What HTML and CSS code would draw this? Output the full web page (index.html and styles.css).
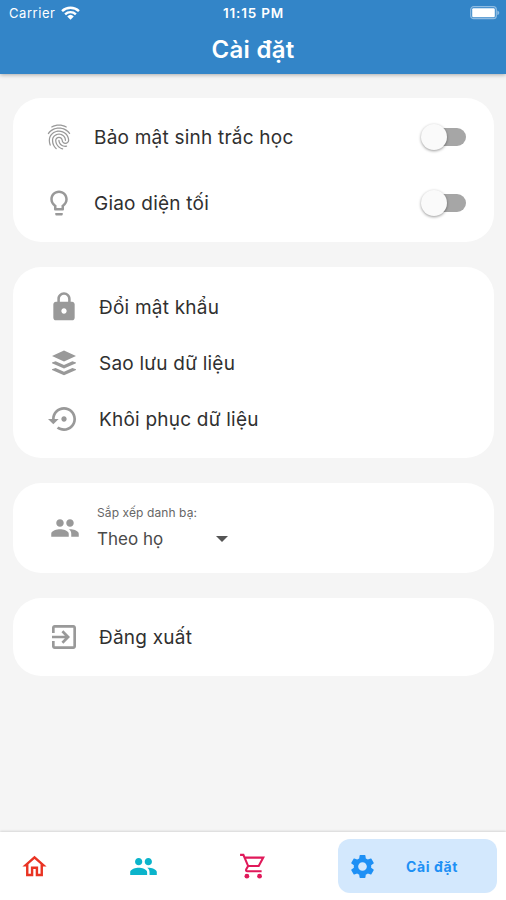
FILE: index.html
```html
<!DOCTYPE html>
<html lang="vi">
<head>
  <meta charset="utf-8">
  <title>Cài đặt</title>
  <link rel="stylesheet" href="styles.css">
</head>
<body>
  <div id="app">
    <header>
      <div class="status-bar">
        <div class="carrier">
          <span>Carrier</span>
          <svg class="wifi" viewBox="0 0 18 13"><path d="M1 4.7a11.5 11.5 0 0 1 16 0M3.9 7.7a7.4 7.4 0 0 1 10.2 0" fill="none" stroke="#fff" stroke-width="2.3"/><path d="M9 12.8L5.9 9.7a4.5 4.5 0 0 1 6.2 0z" fill="#fff"/></svg>
        </div>
        <span class="time">11:15 PM</span>
        <div class="battery">
          <svg viewBox="0 0 30 14"><rect x=".7" y=".7" width="25.6" height="12" rx="3" fill="none" stroke="#8fbce2" stroke-width="1.2"/><rect x="2.2" y="2.2" width="22.6" height="9" rx="1.2" fill="#fff"/><path d="M27.3 4.4c2.6.8 2.6 3.8 0 4.6z" fill="#8fbce2"/></svg>
        </div>
      </div>
      <h1>Cài đặt</h1>
    </header>

    <main>
      <section class="card switches">
        <div class="row">
          <svg class="icon" viewBox="0 0 24 24"><path d="M17.81 4.47c-.08 0-.16-.02-.23-.06C15.66 3.42 14 3 12.01 3c-1.98 0-3.86.47-5.57 1.41-.24.13-.54.04-.68-.2-.13-.24-.04-.55.2-.68C7.82 2.52 9.86 2 12.01 2c2.13 0 3.99.47 6.03 1.52.25.13.34.43.21.67-.09.18-.26.28-.44.28zM3.5 9.72c-.1 0-.2-.03-.29-.09-.23-.16-.28-.47-.12-.7.99-1.4 2.25-2.5 3.75-3.27C9.98 4.04 14 4.03 17.15 5.65c1.5.77 2.76 1.86 3.75 3.25.16.22.11.54-.12.7-.23.16-.54.11-.7-.12-.9-1.26-2.04-2.25-3.39-2.94-2.87-1.47-6.54-1.47-9.4.01-1.36.7-2.5 1.7-3.4 2.96-.08.14-.23.21-.39.21zm6.25 12.07c-.13 0-.26-.05-.35-.15-.87-.87-1.34-1.43-2.01-2.64-.69-1.23-1.05-2.73-1.05-4.34 0-2.97 2.54-5.39 5.66-5.39s5.66 2.42 5.66 5.39c0 .28-.22.5-.5.5s-.5-.22-.5-.5c0-2.42-2.09-4.39-4.66-4.39-2.57 0-4.66 1.97-4.66 4.39 0 1.44.32 2.77.93 3.85.64 1.15 1.08 1.64 1.85 2.42.19.2.19.51 0 .71-.11.1-.24.15-.37.15zm7.17-1.85c-1.19 0-2.24-.3-3.1-.89-1.49-1.01-2.38-2.65-2.38-4.39 0-.28.22-.5.5-.5s.5.22.5.5c0 1.41.72 2.74 1.94 3.56.71.48 1.54.71 2.54.71.24 0 .64-.03 1.04-.1.27-.05.53.13.58.41.05.27-.13.53-.41.58-.57.11-1.07.12-1.21.12zM14.91 22c-.04 0-.09-.01-.13-.02-1.59-.44-2.63-1.03-3.72-2.1-1.4-1.39-2.17-3.24-2.17-5.22 0-1.62 1.38-2.94 3.08-2.94 1.7 0 3.08 1.32 3.08 2.94 0 1.07.93 1.94 2.08 1.94s2.08-.87 2.08-1.94c0-3.77-3.25-6.83-7.25-6.83-2.84 0-5.44 1.58-6.61 4.03-.39.81-.59 1.76-.59 2.8 0 .78.07 2.01.67 3.61.1.26-.03.55-.29.64-.26.1-.55-.04-.64-.29-.49-1.31-.73-2.61-.73-3.96 0-1.2.23-2.29.68-3.24 1.33-2.79 4.28-4.6 7.51-4.6 4.55 0 8.25 3.51 8.25 7.83 0 1.62-1.38 2.94-3.08 2.94s-3.08-1.32-3.08-2.94c0-1.07-.93-1.94-2.08-1.94s-2.08.87-2.08 1.94c0 1.71.66 3.31 1.87 4.51.95.94 1.86 1.46 3.27 1.85.27.07.42.35.35.61-.05.23-.26.38-.47.38z"/></svg>
          <span class="label">Bảo mật sinh trắc học</span>
          <div class="switch"></div>
        </div>
        <div class="row">
          <svg class="icon" viewBox="0 0 24 24"><path d="M9 21c0 .55.45 1 1 1h4c.55 0 1-.45 1-1v-1H9v1zm3-19C8.14 2 5 5.14 5 9c0 2.38 1.19 4.47 3 5.74V17c0 .55.45 1 1 1h6c.55 0 1-.45 1-1v-2.26c1.81-1.27 3-3.36 3-5.74 0-3.86-3.14-7-7-7zm2.85 11.1l-.85.6V16h-4v-2.3l-.85-.6C7.8 12.16 7 10.63 7 9c0-2.76 2.24-5 5-5s5 2.24 5 5c0 1.63-.8 3.16-2.15 4.1z"/></svg>
          <span class="label">Giao diện tối</span>
          <div class="switch"></div>
        </div>
      </section>

      <section class="card menu">
        <div class="row">
          <svg class="icon" viewBox="0 0 24 24"><path d="M18 8h-1V6c0-2.76-2.24-5-5-5S7 3.24 7 6v2H6c-1.1 0-2 .9-2 2v10c0 1.1.9 2 2 2h12c1.1 0 2-.9 2-2V10c0-1.1-.9-2-2-2zm-6 9c-1.1 0-2-.9-2-2s.9-2 2-2 2 .9 2 2-.9 2-2 2zm3.1-9H8.9V6c0-1.71 1.39-3.1 3.1-3.1s3.1 1.39 3.1 3.1v2z"/></svg>
          <span class="label">Đổi mật khẩu</span>
        </div>
        <div class="row">
          <svg class="icon" viewBox="0 0 32 32"><path d="M16 3.5L28 9 16 14.500 4 9zM4 15.600l3.600-1.400 8.400 3.900 8.400-3.900 3.600 1.400v.6l-12 5.400-12-5.400zM4 22.300l3.600-1.400 8.400 3.900 8.400-3.900 3.600 1.400v.6l-12 5.400-12-5.400z"/></svg>
          <span class="label">Sao lưu dữ liệu</span>
        </div>
        <div class="row">
          <svg class="icon" viewBox="0 0 24 24"><path d="M14 12c0-1.1-.9-2-2-2s-2 .9-2 2 .9 2 2 2 2-.9 2-2zm-2-9c-4.97 0-9 4.03-9 9H0l4 4 4-4H5c0-3.87 3.13-7 7-7s7 3.13 7 7-3.13 7-7 7c-1.51 0-2.91-.49-4.06-1.3l-1.42 1.44C8.04 20.3 9.94 21 12 21c4.97 0 9-4.03 9-9s-4.03-9-9-9z"/></svg>
          <span class="label">Khôi phục dữ liệu</span>
        </div>
      </section>

      <section class="card sort">
        <svg class="icon" viewBox="0 0 24 24"><path d="M16 11c1.66 0 2.99-1.34 2.99-3S17.66 5 16 5s-3 1.34-3 3 1.34 3 3 3zm-8 0c1.66 0 2.99-1.34 2.99-3S9.66 5 8 5 5 6.34 5 8s1.34 3 3 3zm0 2c-2.33 0-7 1.17-7 3.5V19h14v-2.5c0-2.33-4.67-3.5-7-3.5zm8 0c-.29 0-.62.02-.97.05 1.16.84 1.97 1.97 1.97 3.45V19h6v-2.5c0-2.33-4.67-3.5-7-3.5z"/></svg>
        <div class="select">
          <div class="caption">Sắp xếp danh bạ:</div>
          <div class="value"><span>Theo họ</span><i class="caret"></i></div>
        </div>
      </section>

      <section class="card logout">
        <div class="row">
          <svg class="icon" viewBox="0 0 24 24"><path d="M10.09 15.59L11.5 17l5-5-5-5-1.41 1.41L12.67 11H3v2h9.67l-2.58 2.59zM19 3H5c-1.11 0-2 .9-2 2v4h2V5h14v14H5v-4H3v4c0 1.1.89 2 2 2h14c1.1 0 2-.9 2-2V5c0-1.1-.9-2-2-2z"/></svg>
          <span class="label">Đăng xuất</span>
        </div>
      </section>
    </main>

    <nav>
      <a class="tab home"><svg viewBox="0 0 24 24"><path d="M12 5.690l5 4.500V18h-2v-6H9v6H7v-7.810l5-4.500M12 3L2 12h3v8h6v-6h2v6h6v-8h3L12 3z"/></svg></a>
      <a class="tab people"><svg viewBox="0 0 24 24"><path d="M16 11c1.66 0 2.99-1.34 2.99-3S17.66 5 16 5s-3 1.34-3 3 1.34 3 3 3zm-8 0c1.66 0 2.99-1.34 2.99-3S9.66 5 8 5 5 6.34 5 8s1.34 3 3 3zm0 2c-2.33 0-7 1.17-7 3.5V19h14v-2.5c0-2.33-4.67-3.5-7-3.5zm8 0c-.29 0-.62.02-.97.05 1.16.84 1.97 1.97 1.97 3.45V19h6v-2.5c0-2.33-4.67-3.5-7-3.5z"/></svg></a>
      <a class="tab cart"><svg viewBox="0 0 28 28"><path d="M2 2.800h3.200l4.600 10.800h10.200L24.400 5.400H6.400M9.800 13.600L8 16.600q-.7 1.900 1 1.900H22.800" fill="none" stroke="#e0195a" stroke-width="2"/><circle cx="8.600" cy="23.400" r="2.300"/><circle cx="20.800" cy="23.400" r="2.300"/></svg></a>
      <a class="tab active"><svg viewBox="0 0 24 24"><path d="M19.14 12.94c.04-.3.06-.61.06-.94 0-.32-.02-.64-.07-.94l2.03-1.58c.18-.14.23-.41.12-.61l-1.92-3.32c-.12-.22-.37-.29-.59-.22l-2.39.96c-.5-.38-1.03-.7-1.62-.94l-.36-2.54c-.04-.24-.24-.41-.48-.41h-3.84c-.24 0-.43.17-.47.41l-.36 2.54c-.59.24-1.13.57-1.62.94l-2.39-.96c-.22-.08-.47 0-.59.22L2.74 8.87c-.12.21-.08.47.12.61l2.03 1.58c-.05.3-.09.63-.09.94s.02.64.07.94l-2.03 1.58c-.18.14-.23.41-.12.61l1.92 3.32c.12.22.37.29.59.22l2.39-.96c.5.38 1.03.7 1.62.94l.36 2.54c.05.24.24.41.48.41h3.84c.24 0 .44-.17.47-.41l.36-2.54c.59-.24 1.13-.56 1.62-.94l2.39.96c.22.08.47 0 .59-.22l1.92-3.32c.12-.22.07-.47-.12-.61l-2.01-1.58zM12 15.6c-1.98 0-3.6-1.62-3.6-3.6s1.62-3.6 3.6-3.6 3.6 1.62 3.6 3.6-1.62 3.6-3.6 3.6z"/></svg><span>Cài đặt</span></a>
    </nav>
  </div>
</body>
</html>
```
FILE: styles.css
```css
* {
  box-sizing: border-box;
}

body {
  margin: 0;
  font-family: Inter, Roboto, sans-serif;
  background-color: #f5f5f5;
  color: #303030;
}

#app {
  height: 900px;
  display: flex;
  flex-direction: column;
}

header {
  height: 74px;
  background-color: #3385c8;
  color: #fff;
  box-shadow: 0 1px 4px rgba(0, 0, 0, 0.3);
}

.status-bar {
  display: grid;
  grid-template-columns: 1fr auto 1fr;
  align-items: center;
  height: 26px;
  padding: 0 6px 0 9px;
  font-size: 13px;
}

.carrier {
  display: flex;
  align-items: center;
  gap: 6px;
  letter-spacing: 0.55px;
}

.wifi {
  width: 19px;
  height: 14px;
}

.time {
  font-weight: 600;
  font-size: 13.5px;
  letter-spacing: 0.8px;
  margin-right: 2px;
}

.battery {
  display: flex;
  justify-content: flex-end;
}

.battery svg {
  width: 30px;
  height: 14px;
}

h1 {
  margin: 0;
  font-size: 24px;
  line-height: 48px;
  font-weight: 600;
  letter-spacing: 0.3px;
  text-align: center;
}

main {
  flex: 1;
  padding: 24px 12px 0 13px;
}

.card {
  background-color: #fff;
  border-radius: 28px;
  margin-bottom: 25px;
}

.row {
  display: flex;
  align-items: center;
}

.icon {
  width: 32px;
  height: 32px;
  fill: #999;
  flex: none;
}

.label {
  font-size: 19px;
  letter-spacing: 0.22px;
}

/* switches */
.switches {
  height: 144px;
  padding: 6px 28px 0 31px;
}

.switches .row {
  height: 66px;
}

.switches .icon {
  width: 30px;
  height: 30px;
}

.switches .label {
  flex: 1;
  margin-left: 20px;
}

.switch {
  display: flex;
  align-items: center;
}

.switch::before {
  content: "";
  width: 26px;
  height: 26px;
  border-radius: 50%;
  background-color: #fafafa;
  box-shadow: 0 1px 3px rgba(0, 0, 0, 0.4);
  z-index: 1;
}

.switch::after {
  content: "";
  width: 34px;
  height: 18px;
  margin-left: -15px;
  border-radius: 9px;
  background-color: #a6a6a6;
}

/* menu */
.menu {
  height: 191px;
  padding: 12px 35px 0;
}

.menu .row {
  height: 56px;
}

.menu .label,
.logout .label {
  margin-left: 19px;
}

/* sort */
.sort {
  display: flex;
  align-items: center;
  height: 90px;
  padding: 0 37px;
}

.sort .icon {
  width: 30px;
  height: 30px;
}

.select {
  margin-left: 17px;
  padding-top: 5px;
}

.caption {
  font-size: 12px;
  line-height: 16px;
  letter-spacing: 0.1px;
  color: #666;
}

.value {
  display: flex;
  align-items: center;
  justify-content: space-between;
  width: 131px;
  height: 36px;
  font-size: 17px;
  color: #4a4a4a;
}

.caret {
  border: 6px solid transparent;
  border-top-color: #555;
  border-bottom: 0;
}

.logout {
  height: 78px;
  padding: 0 35px;
}

.logout .row {
  height: 78px;
}

/* bottom bar */
nav {
  display: flex;
  align-items: center;
  height: 68px;
  padding: 0 9px 0 20px;
  background-color: #fff;
  box-shadow: 0 -1px 2px rgba(0, 0, 0, 0.12);
}

.tab {
  display: flex;
  align-items: center;
}

.tab svg {
  width: 29px;
  height: 29px;
}

.home {
  width: 109px;
  fill: #e93323;
}

.people {
  width: 109px;
  fill: #0bb4cb;
}

.cart {
  flex: 1;
  fill: #e0195a;
}

.active {
  width: 159px;
  height: 54px;
  padding-left: 10px;
  border-radius: 12px;
  background-color: #d3e8fd;
  color: #1e90f5;
  fill: #1e90f5;
  font-size: 14px;
  font-weight: 700;
  letter-spacing: 0.6px;
}

.active span {
  margin-left: 29px;
}
```
